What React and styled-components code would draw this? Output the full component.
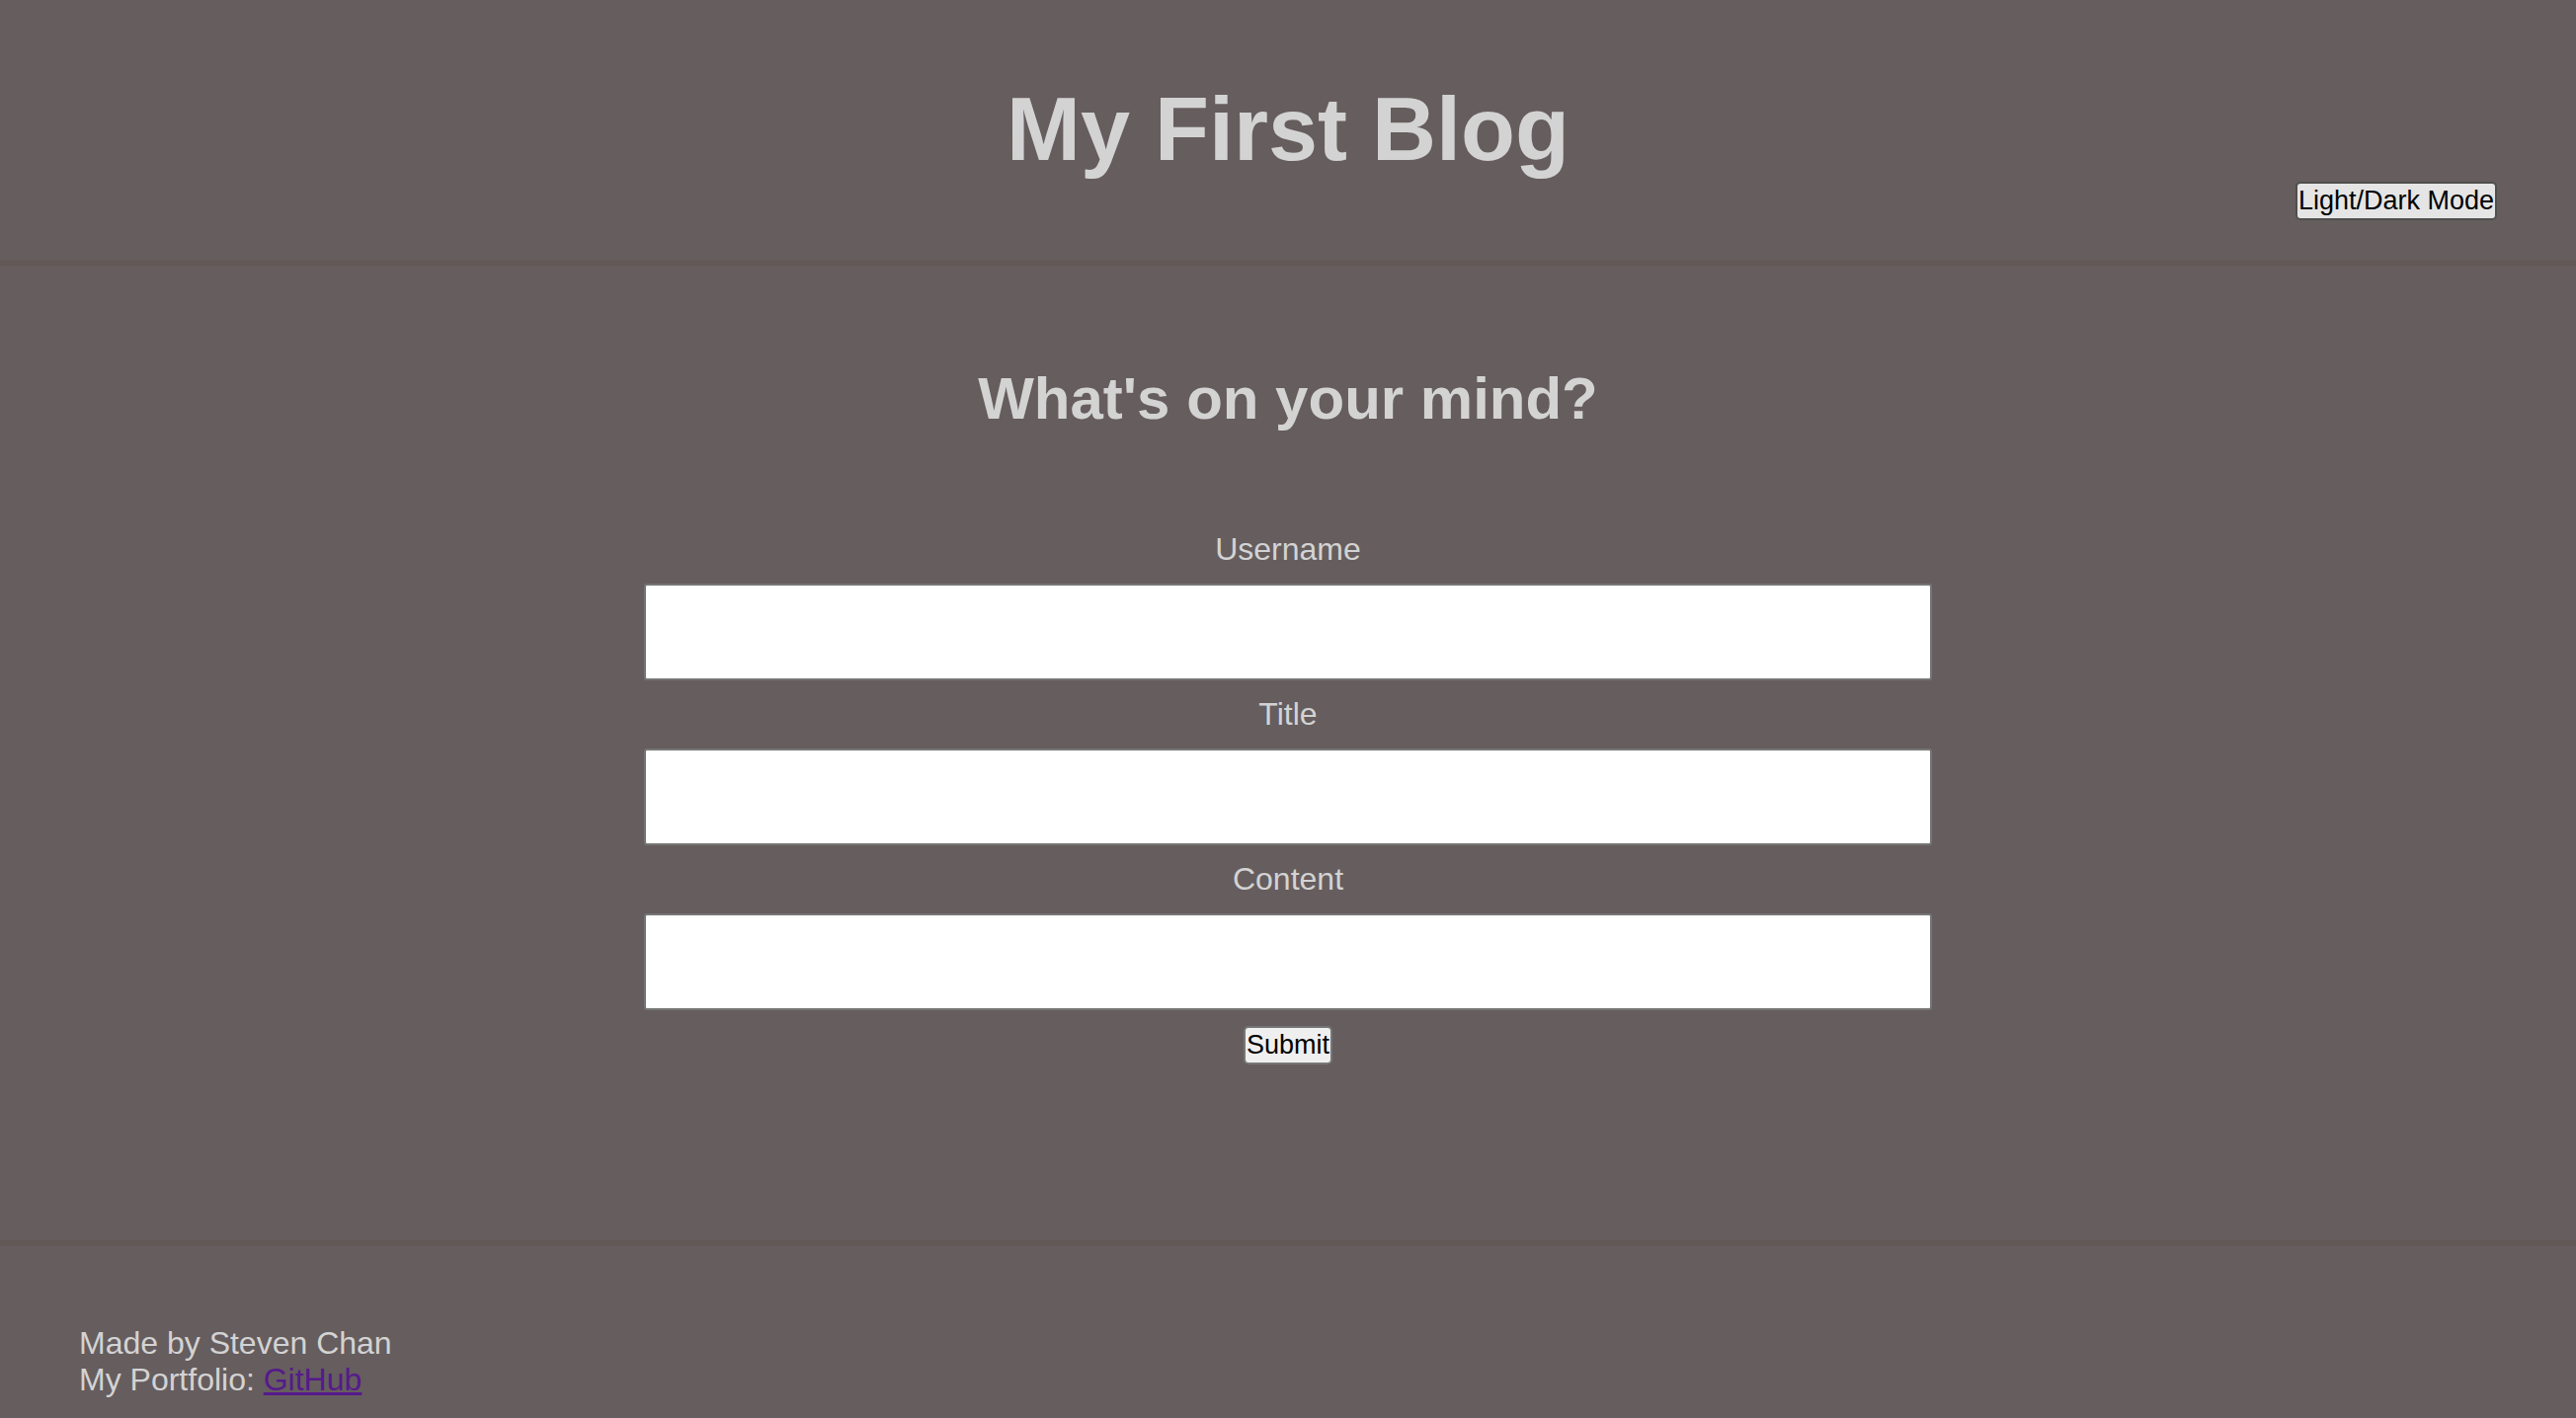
import React from "react";
import styled, { createGlobalStyle } from "styled-components";

const GlobalStyle = createGlobalStyle`
  * {
    box-sizing: border-box;
    margin: 0;
    padding: 0;
  }

  body {
    background: #665d5e;
    color: #d3d3d3;
    font-family: Arial, "Liberation Sans", sans-serif;
    font-size: 32px;
    line-height: 37px;
  }
`;

const Header = styled.header`
  display: grid;
  padding: 80px 80px 40px;
  border-bottom: 6px solid #625856;
`;

const SiteTitle = styled.h1`
  grid-area: 1 / 1;
  padding-bottom: 40px;
  font-size: 90px;
  line-height: 103px;
  text-align: center;
`;

const Button = styled.button`
  height: 39px;
  padding: 0 1px;
  border: 2px solid ${(p) => (p.$active ? "#4f4f4f" : "#767676")};
  border-radius: 5px;
  background: ${(p) => (p.$active ? "#e5e5e5" : "#efefef")};
  color: #000;
  font-family: inherit;
  font-size: 27px;
  line-height: 31px;
`;

const ModeButton = styled(Button)`
  grid-area: 1 / 1;
  place-self: end;
`;

const Main = styled.main`
  padding: 100px 0 178px;
`;

const Question = styled.h2`
  margin-bottom: 100px;
  font-size: 60px;
  line-height: 69px;
  text-align: center;
`;

const Form = styled.form`
  display: flex;
  flex-direction: column;
  align-items: center;
  gap: 16px;
`;

const Input = styled.input`
  width: 50%;
  height: 98px;
  padding: 0 16px;
  border: 2px solid #767676;
  border-radius: 3px;
  background: #fff;
  color: #000;
  font: inherit;
`;

const Footer = styled.footer`
  padding: 80px 80px 20px;
  border-top: 6px solid #625856;
`;

const PortfolioLink = styled.a`
  color: #551a8b;
  text-decoration-thickness: 3px;
`;

const fields = [
  { id: "username", label: "Username" },
  { id: "title", label: "Title" },
  { id: "content", label: "Content" },
];

export default function App() {
  return (
    <>
      <GlobalStyle />
      <Header>
        <SiteTitle>My First Blog</SiteTitle>
        <ModeButton type="button" $active>
          Light/Dark Mode
        </ModeButton>
      </Header>
      <Main>
        <Question>What's on your mind?</Question>
        <Form onSubmit={(event) => event.preventDefault()}>
          {fields.map(({ id, label }) => (
            <React.Fragment key={id}>
              <label htmlFor={id}>{label}</label>
              <Input type="text" id={id} name={id} />
            </React.Fragment>
          ))}
          <Button type="submit">Submit</Button>
        </Form>
      </Main>
      <Footer>
        <p>Made by Steven Chan</p>
        <p>
          My Portfolio: <PortfolioLink href="https://github.com">GitHub</PortfolioLink>
        </p>
      </Footer>
    </>
  );
}
